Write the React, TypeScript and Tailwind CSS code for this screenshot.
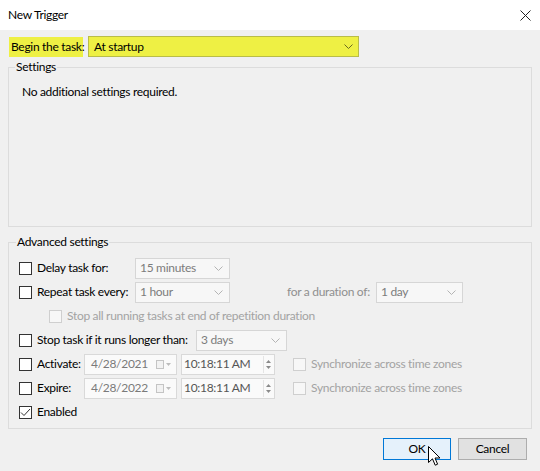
import React from 'react';

const FONT = '"Segoe UI", Lato, "Liberation Sans", sans-serif';

function Chevron({ color = '#606060' }: { color?: string }) {
  return (
    <svg width="9" height="5" viewBox="0 0 9 5" aria-hidden>
      <path d="M0.5 0.5 L4.5 4.5 L8.5 0.5" fill="none" stroke={color} strokeWidth="1" />
    </svg>
  );
}

function Combo({ text, w, disabled = true }: { text: string; w: string; disabled?: boolean }) {
  return (
    <div
      className={`${w} h-[21px] shrink-0 flex items-center justify-between pl-[4px] pr-[6px] border border-[#d6d6d6] bg-[#f7f7f7] text-[#7c7c7c]`}
    >
      <span>{text}</span>
      <Chevron color={disabled ? '#b4b4b4' : '#606060'} />
    </div>
  );
}

function Check({ checked = false, disabled = false }: { checked?: boolean; disabled?: boolean }) {
  return (
    <span
      className={`w-[13px] h-[13px] shrink-0 border flex items-center justify-center ${
        disabled ? 'border-[#cfcfcf] bg-[#f7f7f7]' : 'border-[#333333] bg-white'
      }`}
    >
      {checked && (
        <svg width="11" height="9" viewBox="0 0 11 9" aria-hidden>
          <path d="M1 4.5 L4 7.5 L10 1" fill="none" stroke="#333" strokeWidth="1" />
        </svg>
      )}
    </span>
  );
}

function DateField({ text }: { text: string }) {
  return (
    <div className="w-[93px] h-[21px] shrink-0 flex items-center justify-between pl-[6px] pr-[5px] border border-[#d9d9d9] bg-[#fafafa] text-[#7a7a7a]">
      <span>{text}</span>
      <span className="flex items-center gap-[2px]">
        <span className="w-[8px] h-[9px] border border-[#c4c4c4] bg-[#f2f2f2]" />
        <svg width="5" height="3" viewBox="0 0 5 3" aria-hidden>
          <path d="M0 0 L5 0 L2.5 3 Z" fill="#bcbcbc" />
        </svg>
      </span>
    </div>
  );
}

function TimeField({ text }: { text: string }) {
  return (
    <div className="w-[94px] h-[21px] shrink-0 flex items-center justify-between pl-[2px] pr-[3px] border border-[#d9d9d9] bg-[#fafafa] text-[#555555]">
      <span>{text}</span>
      <span className="flex flex-col items-center gap-[3px] border-l border-[#e4e4e4] pl-[2px] h-[17px] justify-center">
        <svg width="5" height="3" viewBox="0 0 5 3" aria-hidden>
          <path d="M0 3 L5 3 L2.5 0 Z" fill="#8a8a8a" />
        </svg>
        <svg width="5" height="3" viewBox="0 0 5 3" aria-hidden>
          <path d="M0 0 L5 0 L2.5 3 Z" fill="#8a8a8a" />
        </svg>
      </span>
    </div>
  );
}

export default function App() {
  return (
    <div
      className="relative w-[540px] h-[471px] bg-[#f0f0f0] text-[12px] tracking-[-0.3px] text-black flex flex-col overflow-hidden whitespace-nowrap"
      style={{ fontFamily: FONT }}
    >
      {/* title bar */}
      <div className="h-[30px] bg-white flex items-center justify-between pl-[8px] pr-[9px]">
        <span>New Trigger</span>
        <svg width="11" height="11" viewBox="0 0 11 11" aria-hidden>
          <path d="M0.5 0.5 L10.5 10.5 M10.5 0.5 L0.5 10.5" stroke="#222" strokeWidth="1" />
        </svg>
      </div>

      {/* begin the task */}
      <div className="flex items-center h-[21px] mt-[6px] pl-[9px]">
        <div className="h-[20px] w-[74px] shrink-0 bg-[#eef044] flex items-center pl-[2px]">Begin the task:</div>
        <div className="ml-[5px] w-[271px] h-[21px] flex items-center justify-between pl-[5px] pr-[5px] border border-[#b9bd48] bg-[#eef044]">
          <span>At startup</span>
          <Chevron color="#6a6a20" />
        </div>
      </div>

      {/* settings group */}
      <fieldset className="mx-[8px] mt-[2px] h-[168px] border border-[#dcdcdc]">
        <legend className="ml-[6px] px-[1px] leading-[16px]">Settings</legend>
        <p className="mt-[9px] pl-[13px] leading-[16px]">No additional settings required.</p>
      </fieldset>

      {/* advanced settings */}
      <fieldset className="mx-[8px] mt-[7px] h-[195px] border border-[#dcdcdc] pt-[6px] pl-[10px]">
        <legend className="-ml-[3px] px-[1px] leading-[16px]">Advanced settings</legend>

        <div className="h-[24px] flex items-center">
          <Check />
          <span className="ml-[5px] w-[98px] shrink-0">Delay task for:</span>
          <Combo text="15 minutes" w="w-[95px]" />
        </div>

        <div className="h-[24px] flex items-center">
          <Check />
          <span className="ml-[5px] w-[98px] shrink-0">Repeat task every:</span>
          <Combo text="1 hour" w="w-[95px]" />
          <span className="ml-[57px] w-[89px] shrink-0 text-[#8f8f8f]">for a duration of:</span>
          <Combo text="1 day" w="w-[87px]" />
        </div>

        <div className="h-[24px] flex items-center pl-[30px]">
          <Check disabled />
          <span className="ml-[5px] text-[#a3a3a3]">Stop all running tasks at end of repetition duration</span>
        </div>

        <div className="h-[24px] flex items-center">
          <Check />
          <span className="ml-[5px] w-[159px] shrink-0">Stop task if it runs longer than:</span>
          <Combo text="3 days" w="w-[91px]" />
        </div>

        <div className="h-[24px] flex items-center">
          <Check />
          <span className="ml-[5px] w-[47px] shrink-0">Activate:</span>
          <DateField text="4/28/2021" />
          <span className="ml-[4px]">
            <TimeField text="10:18:11 AM" />
          </span>
          <span className="ml-[18px]">
            <Check disabled />
          </span>
          <span className="ml-[5px] text-[#a3a3a3]">Synchronize across time zones</span>
        </div>

        <div className="h-[24px] flex items-center">
          <Check />
          <span className="ml-[5px] w-[47px] shrink-0">Expire:</span>
          <DateField text="4/28/2022" />
          <span className="ml-[4px]">
            <TimeField text="10:18:11 AM" />
          </span>
          <span className="ml-[18px]">
            <Check disabled />
          </span>
          <span className="ml-[5px] text-[#a3a3a3]">Synchronize across time zones</span>
        </div>

        <div className="h-[24px] flex items-center">
          <Check checked />
          <span className="ml-[5px]">Enabled</span>
        </div>
      </fieldset>

      {/* buttons */}
      <div className="flex justify-end gap-[7px] mt-[9px] pr-[13px]">
        <button className="w-[68px] h-[22px] border border-[#0078d7] bg-[#e5f1fb] flex items-center justify-center">
          OK
        </button>
        <button className="w-[69px] h-[22px] border border-[#adadad] bg-[#e1e1e1] flex items-center justify-center">
          Cancel
        </button>
      </div>

      {/* mouse cursor */}
      <svg
        className="absolute left-[428px] top-[446px]"
        width="13"
        height="21"
        viewBox="0 0 13 21"
        aria-hidden
      >
        <path
          d="M0.5 0.5 L0.5 16.5 L4.5 12.8 L7.2 19.2 L9.6 18.2 L7 12 L12 12 Z"
          fill="#fff"
          stroke="#000"
          strokeWidth="1"
          strokeLinejoin="round"
        />
      </svg>
    </div>
  );
}
